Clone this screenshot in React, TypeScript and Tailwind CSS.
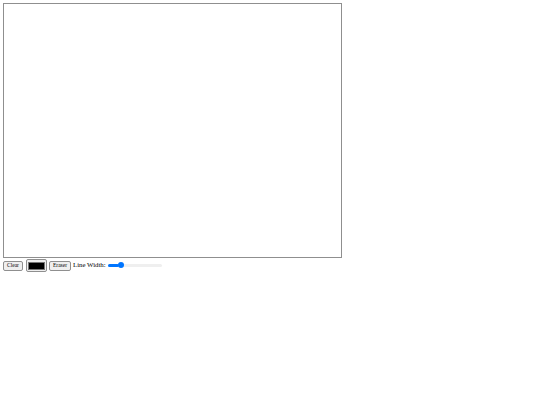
import { useState } from "react";

export default function App() {
  const [color, setColor] = useState("#000000");
  const [lineWidth, setLineWidth] = useState(5);
  const pos = ((lineWidth - 1) / 19) * 54;

  return (
    <div className="w-[540px] h-[405px] bg-white pl-[3px] pt-[3px] font-['Liberation_Serif',serif]">
      {/* Drawing surface */}
      <div className="w-[339px] h-[255px] border border-[#8f8f8f] bg-white" />

      {/* Toolbar */}
      <div className="flex items-center h-[14px]">
        <button className="w-[20px] h-[10px] mt-[2px] border border-[#8f8f8f] rounded-[2px] bg-[#efefef] text-[5.5px] leading-none text-black">
          Clear
        </button>
        <label className="ml-[3px] w-[21px] h-[13px] mt-[1px] border border-[#8f8f8f] rounded-[2px] bg-[#efefef] flex items-center justify-center">
          <span className="block w-[17px] h-[8px] border border-[#777]" style={{ backgroundColor: color }} />
          <input type="color" value={color} onChange={(e) => setColor(e.target.value)} className="hidden" />
        </label>
        <button className="ml-[2px] w-[22px] h-[10px] mt-[2px] border border-[#8f8f8f] rounded-[2px] bg-[#efefef] text-[5.5px] leading-none text-black">
          Eraser
        </button>
        <span className="ml-[2px] mt-[1px] text-[6.8px] leading-none text-black">Line Width:</span>
        <div className="relative ml-[2px] w-[54px] h-[8px] flex items-center">
          <div className="w-full h-[3px] rounded-full bg-[#efefef]" />
          <div className="absolute left-0 h-[3px] rounded-full bg-[#0075ff]" style={{ width: `${pos}px` }} />
          <div className="absolute w-[6px] h-[6px] rounded-full bg-[#0075ff]" style={{ left: `${pos - 1}px` }} />
          <input
            type="range"
            min={1}
            max={20}
            value={lineWidth}
            onChange={(e) => setLineWidth(Number(e.target.value))}
            className="absolute inset-0 opacity-0"
          />
        </div>
      </div>
    </div>
  );
}
